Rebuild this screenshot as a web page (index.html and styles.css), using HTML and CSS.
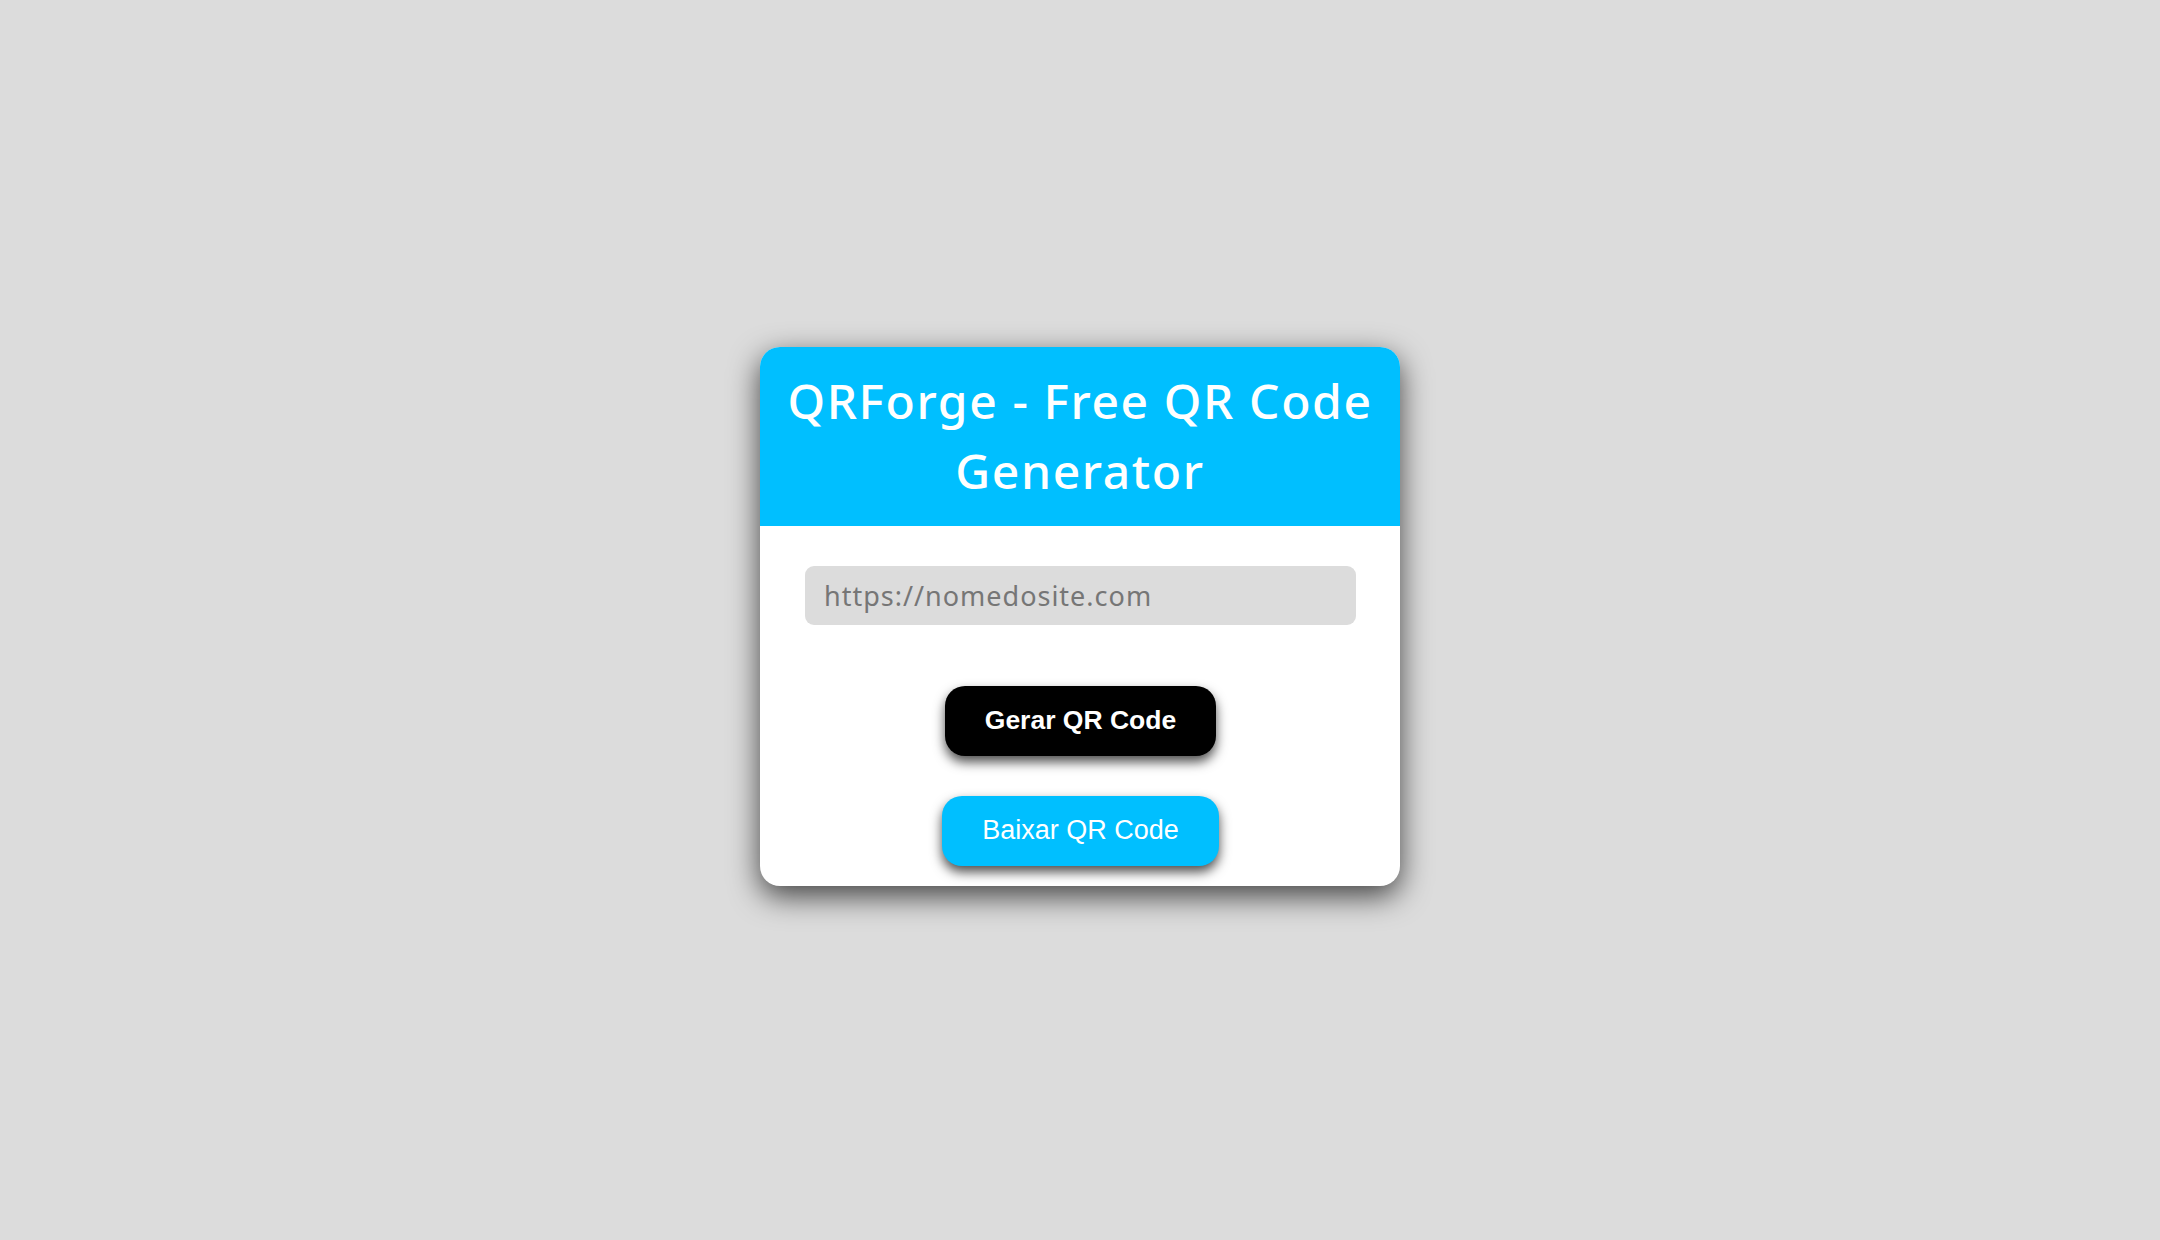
FILE: index.html
```html
<!DOCTYPE html>
<html lang="pt">
<head>
<meta charset="utf-8">
<title>QRForge - Free QR Code Generator</title>
<link rel="stylesheet" href="styles.css">
</head>
<body>
<main class="card">
  <header class="card-header">
    <h1 class="title">QRForge - Free QR Code Generator</h1>
  </header>
  <section class="card-body">
    <input class="url-input" type="text" placeholder="https://nomedosite.com">
    <div class="actions">
      <button class="btn btn-generate">Gerar QR Code</button>
      <button class="btn btn-download">Baixar QR Code</button>
    </div>
  </section>
</main>
</body>
</html>
```

FILE: styles.css
```css
* { box-sizing: border-box; }
html, body { margin: 0; padding: 0; }
body {
  background: #dcdcdc;
  height: 100vh;
  padding-bottom: 8px;
  display: flex;
  align-items: center;
  justify-content: center;
  font-family: "Noto Sans", "Open Sans", sans-serif;
}
.card {
  width: 640px;
  background: #ffffff;
  border-radius: 20px;
  overflow: hidden;
  box-shadow: 0 10px 30px rgba(0, 0, 0, 0.7);
}
.card-header {
  background: #00bfff;
  padding: 19px 10px 20px;
}
.title {
  margin: 0;
  color: #ffffff;
  text-align: center;
  font-family: "Noto Sans", sans-serif;
  font-weight: 500;
  font-size: 48px;
  letter-spacing: 1.6px;
  line-height: 70px;
}
.card-body {
  padding: 40px 44px 20px 45px;
  display: flex;
  flex-direction: column;
}
.url-input {
  width: 100%;
  height: 59px;
  border: none;
  outline: none;
  background: #dcdcdc;
  border-radius: 9px;
  padding: 0 19px;
  font-family: "Noto Sans", sans-serif;
  font-size: 27px;
  letter-spacing: 1px;
  color: #333;
}
.url-input::placeholder { color: #767676; }
.actions {
  margin-top: 61px;
  display: flex;
  flex-direction: column;
  align-items: center;
  gap: 40px;
}
.btn {
  height: 70px;
  border: none;
  border-radius: 20px;
  padding: 0 40px;
  font-family: "Liberation Sans", Arial, sans-serif;
  font-size: 26px;
  color: #ffffff;
  cursor: pointer;
  box-shadow: 0 6px 12px rgba(0, 0, 0, 0.7);
}
.btn-generate {
  background: #000000;
  font-weight: 700;
  font-size: 26.5px;
}
.btn-download {
  background: #00bfff;
  font-weight: 400;
  font-size: 27px;
}
```
